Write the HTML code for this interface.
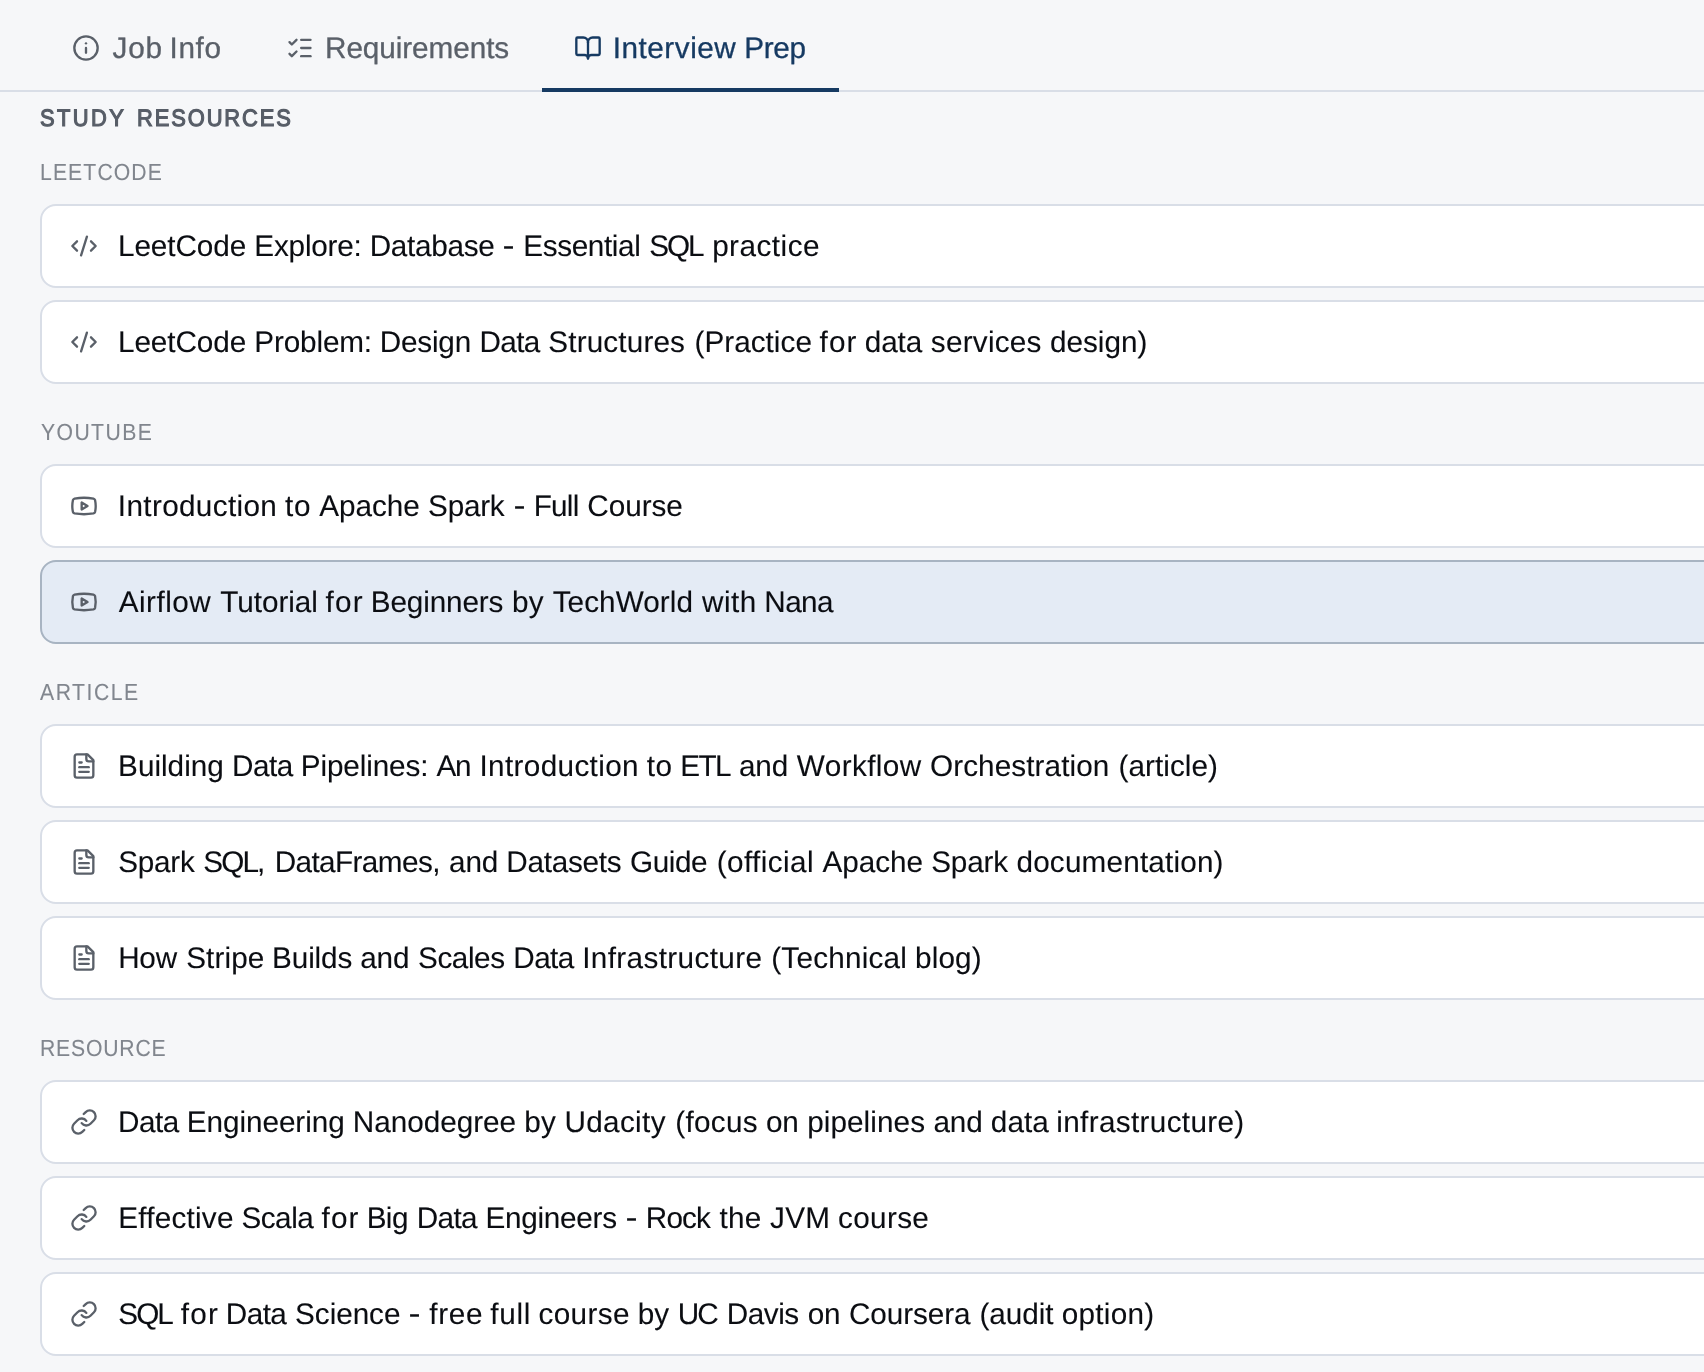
<!DOCTYPE html>
<html><head><meta charset="utf-8"><title>Interview Prep</title>
<style>
html,body{margin:0;padding:0}
html{overflow:hidden}
body{width:1704px;height:1372px;overflow:hidden;background:#f6f7f9;font-family:"Liberation Sans",sans-serif;}
.page{position:relative;width:1704px;height:1372px;overflow:hidden;background:#f6f7f9}
.txt{position:absolute;left:0;top:0;width:1704px;height:1372px;will-change:transform}
.t{position:absolute;white-space:nowrap;display:block;text-rendering:geometricPrecision}
.ic{position:absolute;display:block;overflow:visible}
.gt{font-size:29.7px;line-height:33px;-webkit-text-stroke-width:0.3px}
.gh{font-size:23.8px;line-height:27px;-webkit-text-stroke-width:1.15px;transform:scaleX(0.92);transform-origin:0 0}
.gl{font-size:23.25px;line-height:26px;-webkit-text-stroke-width:0.1px;transform:scaleX(0.91);transform-origin:0 0}
.gi{font-size:29.7px;line-height:33px;-webkit-text-stroke-width:0.1px}
.card{position:absolute;left:40px;width:1700px;height:84px;box-sizing:border-box;border:2px solid #d9dee7;border-radius:16px;background:#fff}
.card.hl{background:#e4ebf5;border-color:#a8b4c2}
.tabline{position:absolute;left:0;top:90px;width:1704px;height:2px;background:#d9dee7}
.active{position:absolute;left:542px;top:88px;width:297px;height:4px;background:#163a62}
</style></head><body><div class="page">
<div class="tabline"></div><div class="active"></div>

<svg class="ic" style="left:72px;top:34px;width:28px;height:28px;color:#5a6069" viewBox="0 0 24 24" fill="none" stroke="currentColor" stroke-width="2" stroke-linecap="round" stroke-linejoin="round"><circle cx="12" cy="12" r="10"/><path d="M12 16v-4"/><path d="M12 8h.01"/></svg>
<svg class="ic" style="left:286px;top:34px;width:28px;height:28px;color:#5a6069" viewBox="0 0 24 24" fill="none" stroke="currentColor" stroke-width="2" stroke-linecap="round" stroke-linejoin="round"><path d="m3 17 2 2 4-4"/><path d="m3 7 2 2 4-4"/><path d="M13 5h8"/><path d="M13 12h8"/><path d="M13 19h8"/></svg>
<svg class="ic" style="left:574px;top:34px;width:28px;height:28px;color:#163a62" viewBox="0 0 24 24" fill="none" stroke="currentColor" stroke-width="2" stroke-linecap="round" stroke-linejoin="round"><path d="M12 7v14"/><path d="M3 18a1 1 0 0 1-1-1V4a1 1 0 0 1 1-1h5a4 4 0 0 1 4 4 4 4 0 0 1 4-4h5a1 1 0 0 1 1 1v13a1 1 0 0 1-1 1h-6a3 3 0 0 0-3 3 3 3 0 0 0-3-3z"/></svg>
<div class="card" style="top:204px"></div>
<svg class="ic" style="left:70px;top:232px;width:28px;height:28px;color:#5a6069" viewBox="0 0 24 24" fill="none" stroke="currentColor" stroke-width="2" stroke-linecap="round" stroke-linejoin="round"><path d="m18 16 4-4-4-4"/><path d="m6 8-4 4 4 4"/><path d="m14.5 4-5 16"/></svg>
<div class="card" style="top:300px"></div>
<svg class="ic" style="left:70px;top:328px;width:28px;height:28px;color:#5a6069" viewBox="0 0 24 24" fill="none" stroke="currentColor" stroke-width="2" stroke-linecap="round" stroke-linejoin="round"><path d="m18 16 4-4-4-4"/><path d="m6 8-4 4 4 4"/><path d="m14.5 4-5 16"/></svg>
<div class="card" style="top:464px"></div>
<svg class="ic" style="left:70px;top:492px;width:28px;height:28px;color:#5a6069" viewBox="0 0 24 24" fill="none" stroke="currentColor" stroke-width="2" stroke-linecap="round" stroke-linejoin="round"><path d="M2.5 17a24.12 24.12 0 0 1 0-10 2 2 0 0 1 1.4-1.4 49.56 49.56 0 0 1 16.2 0A2 2 0 0 1 21.5 7a24.12 24.12 0 0 1 0 10 2 2 0 0 1-1.4 1.4 49.55 49.55 0 0 1-16.2 0A2 2 0 0 1 2.5 17"/><path d="m10 15 5-3-5-3z"/></svg>
<div class="card hl" style="top:560px"></div>
<svg class="ic" style="left:70px;top:588px;width:28px;height:28px;color:#5a6069" viewBox="0 0 24 24" fill="none" stroke="currentColor" stroke-width="2" stroke-linecap="round" stroke-linejoin="round"><path d="M2.5 17a24.12 24.12 0 0 1 0-10 2 2 0 0 1 1.4-1.4 49.56 49.56 0 0 1 16.2 0A2 2 0 0 1 21.5 7a24.12 24.12 0 0 1 0 10 2 2 0 0 1-1.4 1.4 49.55 49.55 0 0 1-16.2 0A2 2 0 0 1 2.5 17"/><path d="m10 15 5-3-5-3z"/></svg>
<div class="card" style="top:724px"></div>
<svg class="ic" style="left:70px;top:752px;width:28px;height:28px;color:#5a6069" viewBox="0 0 24 24" fill="none" stroke="currentColor" stroke-width="2" stroke-linecap="round" stroke-linejoin="round"><path d="M15 2H6a2 2 0 0 0-2 2v16a2 2 0 0 0 2 2h12a2 2 0 0 0 2-2V7Z"/><path d="M14 2v4a2 2 0 0 0 2 2h4"/><path d="M10 9H8"/><path d="M16 13H8"/><path d="M16 17H8"/></svg>
<div class="card" style="top:820px"></div>
<svg class="ic" style="left:70px;top:848px;width:28px;height:28px;color:#5a6069" viewBox="0 0 24 24" fill="none" stroke="currentColor" stroke-width="2" stroke-linecap="round" stroke-linejoin="round"><path d="M15 2H6a2 2 0 0 0-2 2v16a2 2 0 0 0 2 2h12a2 2 0 0 0 2-2V7Z"/><path d="M14 2v4a2 2 0 0 0 2 2h4"/><path d="M10 9H8"/><path d="M16 13H8"/><path d="M16 17H8"/></svg>
<div class="card" style="top:916px"></div>
<svg class="ic" style="left:70px;top:944px;width:28px;height:28px;color:#5a6069" viewBox="0 0 24 24" fill="none" stroke="currentColor" stroke-width="2" stroke-linecap="round" stroke-linejoin="round"><path d="M15 2H6a2 2 0 0 0-2 2v16a2 2 0 0 0 2 2h12a2 2 0 0 0 2-2V7Z"/><path d="M14 2v4a2 2 0 0 0 2 2h4"/><path d="M10 9H8"/><path d="M16 13H8"/><path d="M16 17H8"/></svg>
<div class="card" style="top:1080px"></div>
<svg class="ic" style="left:70px;top:1108px;width:28px;height:28px;color:#5a6069" viewBox="0 0 24 24" fill="none" stroke="currentColor" stroke-width="2" stroke-linecap="round" stroke-linejoin="round"><path d="M10 13a5 5 0 0 0 7.54.54l3-3a5 5 0 0 0-7.07-7.07l-1.72 1.71"/><path d="M14 11a5 5 0 0 0-7.54-.54l-3 3a5 5 0 0 0 7.07 7.07l1.71-1.71"/></svg>
<div class="card" style="top:1176px"></div>
<svg class="ic" style="left:70px;top:1204px;width:28px;height:28px;color:#5a6069" viewBox="0 0 24 24" fill="none" stroke="currentColor" stroke-width="2" stroke-linecap="round" stroke-linejoin="round"><path d="M10 13a5 5 0 0 0 7.54.54l3-3a5 5 0 0 0-7.07-7.07l-1.72 1.71"/><path d="M14 11a5 5 0 0 0-7.54-.54l-3 3a5 5 0 0 0 7.07 7.07l1.71-1.71"/></svg>
<div class="card" style="top:1272px"></div>
<svg class="ic" style="left:70px;top:1300px;width:28px;height:28px;color:#5a6069" viewBox="0 0 24 24" fill="none" stroke="currentColor" stroke-width="2" stroke-linecap="round" stroke-linejoin="round"><path d="M10 13a5 5 0 0 0 7.54.54l3-3a5 5 0 0 0-7.07-7.07l-1.72 1.71"/><path d="M14 11a5 5 0 0 0-7.54-.54l-3 3a5 5 0 0 0 7.07 7.07l1.71-1.71"/></svg>
<div class="txt">
<span class="t gt" style="left:112.61px;top:32px;color:#5a6069;letter-spacing:0.818px">Job</span>
<span class="t gt" style="left:169.51px;top:32px;color:#5a6069;letter-spacing:0.627px">Info</span>
<span class="t gt" style="left:325.03px;top:32px;color:#5a6069;letter-spacing:-0.058px">Requirements</span>
<span class="t gt" style="left:612.66px;top:32px;color:#163a62;letter-spacing:0.543px">Interview</span>
<span class="t gt" style="left:744.18px;top:32px;color:#163a62;letter-spacing:-0.277px">Prep</span>
<span class="t gh" style="left:40.23px;top:105px;color:#575d67;letter-spacing:2.606px">STUDY</span>
<span class="t gh" style="left:136.68px;top:105px;color:#575d67;letter-spacing:2.061px">RESOURCES</span>
<span class="t gl" style="left:40.13px;top:159px;color:#81868e;letter-spacing:1.230px">LEETCODE</span>
<span class="t gl" style="left:41.16px;top:419px;color:#81868e;letter-spacing:1.563px">YOUTUBE</span>
<span class="t gl" style="left:39.64px;top:679px;color:#81868e;letter-spacing:1.696px">ARTICLE</span>
<span class="t gl" style="left:40.02px;top:1035px;color:#81868e;letter-spacing:0.901px">RESOURCE</span>
<span class="t gi" style="left:118.02px;top:230px;color:#0b0d12;letter-spacing:-0.088px">LeetCode</span>
<span class="t gi" style="left:254.33px;top:230px;color:#0b0d12;letter-spacing:-0.201px">Explore:</span>
<span class="t gi" style="left:369.66px;top:230px;color:#0b0d12;letter-spacing:-0.288px">Database</span>
<span class="t gi" style="left:503.96px;top:230px;color:#0b0d12;letter-spacing:3.015px;transform:translate(-0.5px,-0.9px) scale(1.22,1.08);transform-origin:35% 62%">-</span>
<span class="t gi" style="left:523.27px;top:230px;color:#0b0d12;letter-spacing:-0.365px">Essential</span>
<span class="t gi" style="left:649.14px;top:230px;color:#0b0d12;letter-spacing:-2.029px">SQL</span>
<span class="t gi" style="left:712.13px;top:230px;color:#0b0d12;letter-spacing:0.487px">practice</span>
<span class="t gi" style="left:118.02px;top:326px;color:#0b0d12;letter-spacing:-0.088px">LeetCode</span>
<span class="t gi" style="left:254.35px;top:326px;color:#0b0d12;letter-spacing:-0.146px">Problem:</span>
<span class="t gi" style="left:379.71px;top:326px;color:#0b0d12;letter-spacing:-0.186px">Design</span>
<span class="t gi" style="left:479.54px;top:326px;color:#0b0d12;letter-spacing:-0.657px">Data</span>
<span class="t gi" style="left:548.34px;top:326px;color:#0b0d12;letter-spacing:0.148px">Structures</span>
<span class="t gi" style="left:694.47px;top:326px;color:#0b0d12;letter-spacing:0.038px">(Practice</span>
<span class="t gi" style="left:819.61px;top:326px;color:#0b0d12;letter-spacing:1.093px">for</span>
<span class="t gi" style="left:864.72px;top:326px;color:#0b0d12;letter-spacing:-0.077px">data</span>
<span class="t gi" style="left:930.86px;top:326px;color:#0b0d12;letter-spacing:0.241px">services</span>
<span class="t gi" style="left:1049.91px;top:326px;color:#0b0d12;letter-spacing:0.027px">design)</span>
<span class="t gi" style="left:117.82px;top:490px;color:#0b0d12;letter-spacing:0.356px">Introduction</span>
<span class="t gi" style="left:284.93px;top:490px;color:#0b0d12;letter-spacing:0.748px">to</span>
<span class="t gi" style="left:319.13px;top:490px;color:#0b0d12;letter-spacing:-0.019px">Apache</span>
<span class="t gi" style="left:428.12px;top:490px;color:#0b0d12;letter-spacing:-0.253px">Spark</span>
<span class="t gi" style="left:514.65px;top:490px;color:#0b0d12;letter-spacing:3.000px;transform:translate(-0.5px,-0.9px) scale(1.22,1.08);transform-origin:35% 62%">-</span>
<span class="t gi" style="left:533.71px;top:490px;color:#0b0d12;letter-spacing:-0.769px">Full</span>
<span class="t gi" style="left:587.29px;top:490px;color:#0b0d12;letter-spacing:-0.039px">Course</span>
<span class="t gi" style="left:118.63px;top:586px;color:#0b0d12;letter-spacing:0.496px">Airflow</span>
<span class="t gi" style="left:220.34px;top:586px;color:#0b0d12;letter-spacing:-0.063px">Tutorial</span>
<span class="t gi" style="left:325.54px;top:586px;color:#0b0d12;letter-spacing:1.205px">for</span>
<span class="t gi" style="left:370.72px;top:586px;color:#0b0d12;letter-spacing:-0.122px">Beginners</span>
<span class="t gi" style="left:511.97px;top:586px;color:#0b0d12;letter-spacing:0.211px">by</span>
<span class="t gi" style="left:552.67px;top:586px;color:#0b0d12;letter-spacing:0.082px">TechWorld</span>
<span class="t gi" style="left:701.97px;top:586px;color:#0b0d12;letter-spacing:0.512px">with</span>
<span class="t gi" style="left:764.32px;top:586px;color:#0b0d12;letter-spacing:-0.588px">Nana</span>
<span class="t gi" style="left:118.07px;top:750px;color:#0b0d12;letter-spacing:0.013px">Building</span>
<span class="t gi" style="left:231.99px;top:750px;color:#0b0d12;letter-spacing:-0.518px">Data</span>
<span class="t gi" style="left:300.77px;top:750px;color:#0b0d12;letter-spacing:-0.118px">Pipelines:</span>
<span class="t gi" style="left:436.48px;top:750px;color:#0b0d12;letter-spacing:-1.206px">An</span>
<span class="t gi" style="left:479.47px;top:750px;color:#0b0d12;letter-spacing:0.357px">Introduction</span>
<span class="t gi" style="left:646.63px;top:750px;color:#0b0d12;letter-spacing:0.573px">to</span>
<span class="t gi" style="left:680.35px;top:750px;color:#0b0d12;letter-spacing:-1.596px">ETL</span>
<span class="t gi" style="left:738.97px;top:750px;color:#0b0d12;letter-spacing:-0.174px">and</span>
<span class="t gi" style="left:796.85px;top:750px;color:#0b0d12;letter-spacing:0.395px">Workflow</span>
<span class="t gi" style="left:929.96px;top:750px;color:#0b0d12;letter-spacing:0.099px">Orchestration</span>
<span class="t gi" style="left:1118.62px;top:750px;color:#0b0d12;letter-spacing:0.047px">(article)</span>
<span class="t gi" style="left:118.22px;top:846px;color:#0b0d12;letter-spacing:-0.223px">Spark</span>
<span class="t gi" style="left:203.37px;top:846px;color:#0b0d12;letter-spacing:-1.916px">SQL,</span>
<span class="t gi" style="left:274.63px;top:846px;color:#0b0d12;letter-spacing:-0.580px">DataFrames,</span>
<span class="t gi" style="left:449.05px;top:846px;color:#0b0d12;letter-spacing:-0.177px">and</span>
<span class="t gi" style="left:506.37px;top:846px;color:#0b0d12;letter-spacing:-0.261px">Datasets</span>
<span class="t gi" style="left:630.05px;top:846px;color:#0b0d12;letter-spacing:-0.441px">Guide</span>
<span class="t gi" style="left:716.73px;top:846px;color:#0b0d12;letter-spacing:0.426px">(official</span>
<span class="t gi" style="left:822.40px;top:846px;color:#0b0d12;letter-spacing:-0.002px">Apache</span>
<span class="t gi" style="left:931.28px;top:846px;color:#0b0d12;letter-spacing:-0.206px">Spark</span>
<span class="t gi" style="left:1016.47px;top:846px;color:#0b0d12;letter-spacing:0.184px">documentation)</span>
<span class="t gi" style="left:118.14px;top:942px;color:#0b0d12;letter-spacing:-0.201px">How</span>
<span class="t gi" style="left:186.17px;top:942px;color:#0b0d12;letter-spacing:0.115px">Stripe</span>
<span class="t gi" style="left:272.11px;top:942px;color:#0b0d12;letter-spacing:-0.140px">Builds</span>
<span class="t gi" style="left:360.13px;top:942px;color:#0b0d12;letter-spacing:-0.104px">and</span>
<span class="t gi" style="left:418.02px;top:942px;color:#0b0d12;letter-spacing:-0.417px">Scales</span>
<span class="t gi" style="left:513.33px;top:942px;color:#0b0d12;letter-spacing:-0.593px">Data</span>
<span class="t gi" style="left:582.15px;top:942px;color:#0b0d12;letter-spacing:0.378px">Infrastructure</span>
<span class="t gi" style="left:771.28px;top:942px;color:#0b0d12;letter-spacing:0.217px">(Technical</span>
<span class="t gi" style="left:914.95px;top:942px;color:#0b0d12;letter-spacing:0.183px">blog)</span>
<span class="t gi" style="left:118.04px;top:1106px;color:#0b0d12;letter-spacing:-0.530px">Data</span>
<span class="t gi" style="left:186.87px;top:1106px;color:#0b0d12;letter-spacing:-0.063px">Engineering</span>
<span class="t gi" style="left:352.77px;top:1106px;color:#0b0d12;letter-spacing:-0.006px">Nanodegree</span>
<span class="t gi" style="left:524.30px;top:1106px;color:#0b0d12;letter-spacing:0.213px">by</span>
<span class="t gi" style="left:564.38px;top:1106px;color:#0b0d12;letter-spacing:0.352px">Udacity</span>
<span class="t gi" style="left:675.32px;top:1106px;color:#0b0d12;letter-spacing:0.287px">(focus</span>
<span class="t gi" style="left:765.91px;top:1106px;color:#0b0d12;letter-spacing:-0.083px">on</span>
<span class="t gi" style="left:807.15px;top:1106px;color:#0b0d12;letter-spacing:0.086px">pipelines</span>
<span class="t gi" style="left:933.47px;top:1106px;color:#0b0d12;letter-spacing:-0.151px">and</span>
<span class="t gi" style="left:990.85px;top:1106px;color:#0b0d12;letter-spacing:0.077px">data</span>
<span class="t gi" style="left:1056.32px;top:1106px;color:#0b0d12;letter-spacing:0.342px">infrastructure)</span>
<span class="t gi" style="left:118.16px;top:1202px;color:#0b0d12;letter-spacing:0.246px">Effective</span>
<span class="t gi" style="left:241.38px;top:1202px;color:#0b0d12;letter-spacing:-0.457px">Scala</span>
<span class="t gi" style="left:321.57px;top:1202px;color:#0b0d12;letter-spacing:1.093px">for</span>
<span class="t gi" style="left:366.66px;top:1202px;color:#0b0d12;letter-spacing:-0.587px">Big</span>
<span class="t gi" style="left:416.69px;top:1202px;color:#0b0d12;letter-spacing:-0.611px">Data</span>
<span class="t gi" style="left:485.45px;top:1202px;color:#0b0d12;letter-spacing:-0.267px">Engineers</span>
<span class="t gi" style="left:626.70px;top:1202px;color:#0b0d12;letter-spacing:3.000px;transform:translate(-0.5px,-0.9px) scale(1.22,1.08);transform-origin:35% 62%">-</span>
<span class="t gi" style="left:645.78px;top:1202px;color:#0b0d12;letter-spacing:-0.815px">Rock</span>
<span class="t gi" style="left:719.46px;top:1202px;color:#0b0d12;letter-spacing:0.326px">the</span>
<span class="t gi" style="left:770.11px;top:1202px;color:#0b0d12;letter-spacing:0.290px">JVM</span>
<span class="t gi" style="left:837.94px;top:1202px;color:#0b0d12;letter-spacing:0.360px">course</span>
<span class="t gi" style="left:118.32px;top:1298px;color:#0b0d12;letter-spacing:-1.983px">SQL</span>
<span class="t gi" style="left:180.77px;top:1298px;color:#0b0d12;letter-spacing:1.256px">for</span>
<span class="t gi" style="left:225.81px;top:1298px;color:#0b0d12;letter-spacing:-0.551px">Data</span>
<span class="t gi" style="left:295.10px;top:1298px;color:#0b0d12;letter-spacing:-0.048px">Science</span>
<span class="t gi" style="left:409.95px;top:1298px;color:#0b0d12;letter-spacing:3.000px;transform:translate(-0.5px,-0.9px) scale(1.22,1.08);transform-origin:35% 62%">-</span>
<span class="t gi" style="left:429.19px;top:1298px;color:#0b0d12;letter-spacing:0.694px">free</span>
<span class="t gi" style="left:490.23px;top:1298px;color:#0b0d12;letter-spacing:0.758px">full</span>
<span class="t gi" style="left:538.60px;top:1298px;color:#0b0d12;letter-spacing:0.338px">course</span>
<span class="t gi" style="left:637.67px;top:1298px;color:#0b0d12;letter-spacing:0.153px">by</span>
<span class="t gi" style="left:677.64px;top:1298px;color:#0b0d12;letter-spacing:-1.837px">UC</span>
<span class="t gi" style="left:726.82px;top:1298px;color:#0b0d12;letter-spacing:-0.472px">Davis</span>
<span class="t gi" style="left:807.81px;top:1298px;color:#0b0d12;letter-spacing:-0.289px">on</span>
<span class="t gi" style="left:848.94px;top:1298px;color:#0b0d12;letter-spacing:-0.081px">Coursera</span>
<span class="t gi" style="left:979.39px;top:1298px;color:#0b0d12;letter-spacing:-0.036px">(audit</span>
<span class="t gi" style="left:1061.87px;top:1298px;color:#0b0d12;letter-spacing:0.232px">option)</span>
</div>
</div></body></html>
